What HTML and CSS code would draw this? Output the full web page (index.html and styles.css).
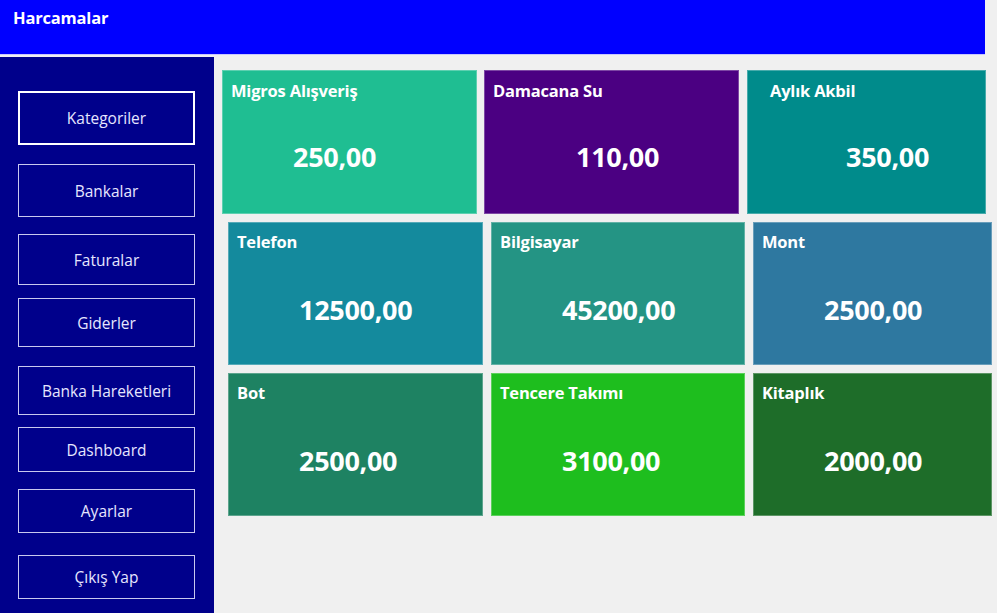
FILE: index.html
```html
<!DOCTYPE html>
<html lang="tr">
<head>
<meta charset="utf-8">
<title>Harcamalar</title>
<link rel="stylesheet" href="styles.css">
</head>
<body>
<header class="topbar"><span class="app-title">Harcamalar</span></header>
<div class="layout">
  <nav class="sidebar">
    <a class="nav-btn active">Kategoriler</a>
    <a class="nav-btn">Bankalar</a>
    <a class="nav-btn">Faturalar</a>
    <a class="nav-btn">Giderler</a>
    <a class="nav-btn">Banka Hareketleri</a>
    <a class="nav-btn">Dashboard</a>
    <a class="nav-btn">Ayarlar</a>
    <a class="nav-btn">Çıkış Yap</a>
  </nav>
  <main class="content">
    <div class="row row-first">
      <div class="card c-migros"><div class="card-title">Migros Alışveriş</div><div class="card-value">250,00</div></div>
      <div class="card c-damacana"><div class="card-title">Damacana Su</div><div class="card-value v-mid">110,00</div></div>
      <div class="card c-akbil narrow"><div class="card-title t-indent">Aylık Akbil</div><div class="card-value v-far">350,00</div></div>
    </div>
    <div class="row">
      <div class="card c-telefon"><div class="card-title">Telefon</div><div class="card-value">12500,00</div></div>
      <div class="card c-bilgisayar slim"><div class="card-title">Bilgisayar</div><div class="card-value">45200,00</div></div>
      <div class="card c-mont narrow"><div class="card-title">Mont</div><div class="card-value">2500,00</div></div>
    </div>
    <div class="row">
      <div class="card c-bot"><div class="card-title">Bot</div><div class="card-value">2500,00</div></div>
      <div class="card c-tencere slim"><div class="card-title">Tencere Takımı</div><div class="card-value">3100,00</div></div>
      <div class="card c-kitaplik narrow"><div class="card-title">Kitaplık</div><div class="card-value">2000,00</div></div>
    </div>
  </main>
</div>
</body>
</html>
```
FILE: styles.css
```css
* { box-sizing: border-box; }
html, body { margin: 0; padding: 0; }
body {
  background: #f0f0f0;
  font-family: "Open Sans", "Noto Sans", "DejaVu Sans", sans-serif;
  width: 997px;
  height: 613px;
  overflow: hidden;
}
.topbar {
  width: 985px;
  height: 55px;
  background: #0000ff;
  border-bottom: 1px solid #c8c8ff;
  padding: 6px 0 0 13px;
}
.app-title {
  color: #ffffff;
  font-weight: 700;
  font-size: 16.5px;
  letter-spacing: -0.2px;
}
.layout {
  display: flex;
  margin-top: 2px;
  height: 556px;
}
.sidebar {
  width: 214px;
  flex: none;
  background: #00008b;
  display: flex;
  flex-direction: column;
  padding: 34px 0 0 18px;
}
.nav-btn {
  width: 177px;
  height: 44px;
  border: 1px solid #c8c8ee;
  color: #e6e6ff;
  font-size: 15.5px;
  display: flex;
  align-items: center;
  justify-content: center;
}
.nav-btn.active { border: 2px solid #ffffff; }
.nav-btn:nth-child(1) { height: 54px; }
.nav-btn:nth-child(2) { height: 53px; margin-top: 19px; }
.nav-btn:nth-child(3) { height: 51px; margin-top: 17px; }
.nav-btn:nth-child(4) { height: 49px; margin-top: 13px; }
.nav-btn:nth-child(5) { height: 49px; margin-top: 19px; }
.nav-btn:nth-child(6) { height: 45px; margin-top: 12px; }
.nav-btn:nth-child(7) { height: 44px; margin-top: 17px; }
.nav-btn:nth-child(8) { height: 44px; margin-top: 22px; }

.content {
  flex: 1;
  padding-top: 13px;
  display: flex;
  flex-direction: column;
  gap: 8px;
}
.row {
  display: flex;
  gap: 8px;
  margin-left: 14px;
}
.row-first { margin-left: 8px; gap: 7px; }
.row-first .narrow { margin-left: 1px; }
.card {
  width: 255px;
  height: 143px;
  border: 1px solid rgba(255, 255, 255, 0.28);
  color: #ffffff;
  padding: 8px 0 0 8px;
}
.row-first .card { height: 144px; padding-top: 9px; }
.card.slim { width: 254px; }
.card.narrow { width: 239px; }
.card-title {
  font-weight: 700;
  font-size: 16.5px;
  line-height: 22px;
  letter-spacing: -0.2px;
}
.t-indent { padding-left: 14px; }
.card-value {
  margin-top: 39px;
  padding-left: 62px;
  font-weight: 700;
  font-size: 27px;
  line-height: 36px;
  letter-spacing: -0.3px;
}
.row-first .card-value { margin-top: 37px; }
.row-first .v-mid { padding-left: 83px; }
.row-first .v-far { padding-left: 90px; }

.c-migros { background: #1fbe92; }
.c-damacana { background: #4b0082; }
.c-akbil { background: #008b8b; }
.c-telefon { background: #148a9d; }
.c-bilgisayar { background: #249484; }
.c-mont { background: #2e78a0; }
.c-bot { background: #1e8262; }
.c-tencere { background: #1ebe1e; }
.c-kitaplik { background: #1e6d29; }
```
